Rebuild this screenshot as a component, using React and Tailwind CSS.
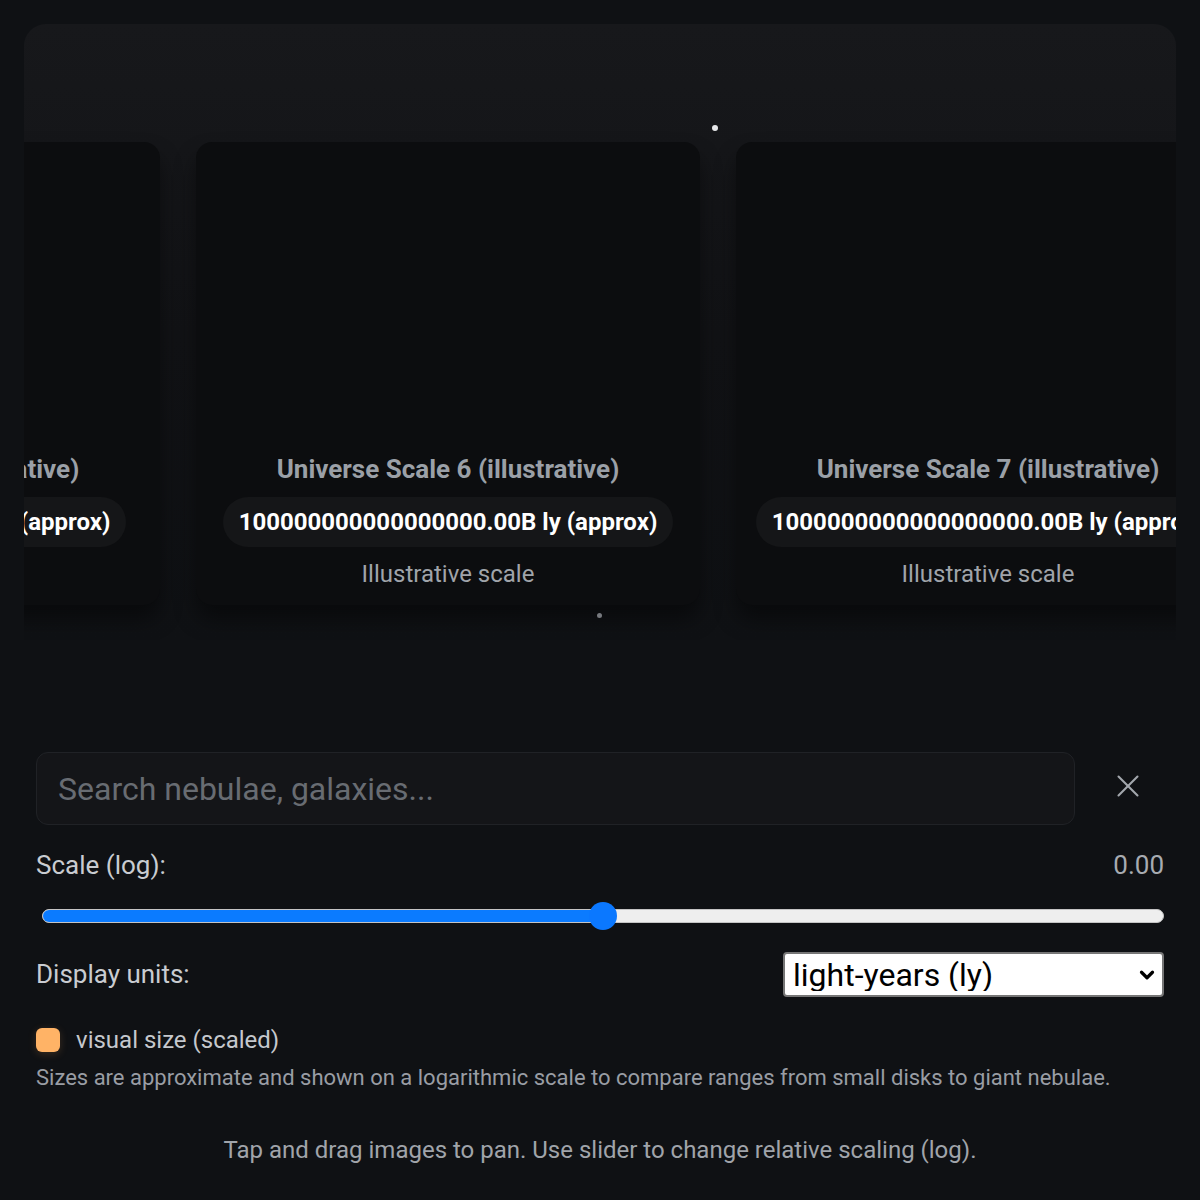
import React, { useState } from 'react'
import { X, ChevronDown } from 'lucide-react'

const SCALES = [
  { id: 5, size: '10000000000000000.00B' },
  { id: 6, size: '100000000000000000.00B' },
  { id: 7, size: '1000000000000000000.00B' },
]

function ScaleCard({ item }) {
  return (
    <div className="flex h-[463px] w-[504px] shrink-0 flex-col items-center justify-end rounded-2xl bg-[#0c0d0f] pb-[15px] shadow-[0_14px_22px_rgba(0,0,0,0.45)]">
      <h3 className="whitespace-nowrap text-[26px] font-bold leading-8 text-[#9ba0a7]">
        Universe Scale {item.id} (illustrative)
      </h3>
      <div className="mt-3 flex h-[50px] items-center whitespace-nowrap rounded-full bg-[#151618] px-4 text-[24px] font-bold text-white">
        {item.size} ly (approx)
      </div>
      <p className="mt-[11px] text-[24px] leading-8 text-[#a0a4aa]">Illustrative scale</p>
    </div>
  )
}

export default function App() {
  const [scale] = useState(0)
  const min = -10
  const max = 10
  const pct = ((scale - min) / (max - min)) * 100

  return (
    <div className="min-h-screen bg-[#0f1114] pt-6 [font-family:Roboto,'Noto_Sans',sans-serif]">
      {/* carousel */}
      <div className="relative mx-6 h-[616px] overflow-hidden rounded-t-[22px] bg-linear-to-b from-[#17181b] via-[#121316] to-[#0f1114] pt-[118px]">
        <div className="-ml-[368px] flex gap-9">
          {SCALES.map(item => (
            <ScaleCard key={item.id} item={item} />
          ))}
        </div>
        {/* stars */}
        <span className="absolute left-[688px] top-[101px] h-[6px] w-[6px] rounded-full bg-[#e6e7e9]" />
        <span className="absolute left-[573px] top-[589px] h-[5px] w-[5px] rounded-full bg-[#76797e]" />
      </div>

      {/* controls */}
      <div className="mt-[112px] px-9">
        <div className="flex items-center gap-[17px]">
          <input
            type="text"
            placeholder="Search nebulae, galaxies..."
            className="h-[73px] flex-1 rounded-xl border border-[#202226] bg-[#141518] px-[21px] text-[32px] text-white outline-none placeholder:text-[#686c72]"
          />
          <button className="flex h-[73px] w-[72px] items-center justify-center pb-[6px] text-[#a3a7ad]">
            <X size={38} strokeWidth={1.3} />
          </button>
        </div>

        <div className="mt-[22px] flex items-center justify-between text-[26px] leading-9">
          <span className="text-[#c9ccd1]">Scale (log):</span>
          <span className="text-[#a7abb1]">{scale.toFixed(2)}</span>
        </div>

        <div className="relative ml-1.5 mt-[19px] flex h-7 items-center">
          <div className="flex h-[14px] w-full overflow-hidden rounded-full border border-[#c4c4c4] bg-[#eeeeee]">
            <div className="h-full bg-[#0b7bff]" style={{ width: `${pct}%` }} />
          </div>
          <div
            className="absolute top-0 h-7 w-7 -translate-x-1/2 rounded-full bg-[#0b78ff]"
            style={{ left: `${pct}%` }}
          />
        </div>

        <div className="mt-[22px] flex h-[45px] items-center justify-between">
          <span className="text-[26px] text-[#c9ccd1]">Display units:</span>
          <div className="relative h-[45px] w-[381px]">
            <select className="h-full w-full appearance-none rounded-[4px] border-2 border-[#767676] bg-white pl-2 text-[32px] leading-none text-black outline-none">
              <option>light-years (ly)</option>
              <option>parsecs (pc)</option>
              <option>kilometres (km)</option>
            </select>
            <ChevronDown
              size={22}
              strokeWidth={3.5}
              className="pointer-events-none absolute right-[6px] top-[12px] text-black"
            />
          </div>
        </div>

        <label className="mt-[27px] flex h-8 items-center gap-4">
          <span className="h-6 w-6 rounded-md bg-[#ffb366] shadow-[0_2px_8px_rgba(255,170,90,0.18)]" />
          <span className="text-[24px] text-[#c5c8cd]">visual size (scaled)</span>
        </label>

        <p className="mt-2 text-[22px] leading-7 text-[#999da4]">
          Sizes are approximate and shown on a logarithmic scale to compare ranges from small disks to giant nebulae.
        </p>

        <p className="mt-[42px] text-center text-[24px] leading-8 text-[#a0a4aa]">
          Tap and drag images to pan. Use slider to change relative scaling (log).
        </p>
      </div>
    </div>
  )
}
